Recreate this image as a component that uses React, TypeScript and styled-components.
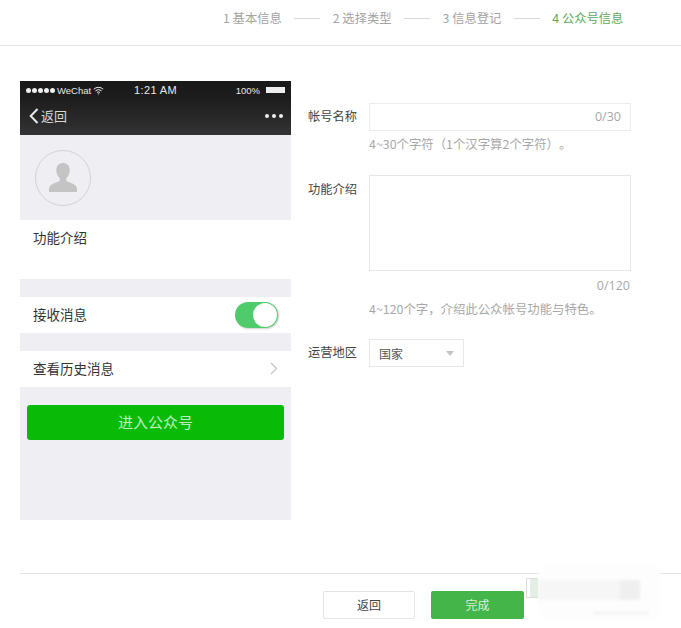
import { createGlobalStyle, styled } from 'styled-components';

const FONT = '"Noto Sans CJK SC", "Liberation Sans", sans-serif';

const GlobalStyle = createGlobalStyle`
  html, body {
    margin: 0;
    padding: 0;
    background: #fff;
    font-family: ${FONT};
  }
`;

const STEPS = ['1 基本信息', '2 选择类型', '3 信息登记', '4 公众号信息'];

const App = () => {
  return (
    <Page>
      <GlobalStyle />
      <StepBar>
        {STEPS.map((step, i) => (
          <StepItem key={step}>
            {i > 0 && <StepLine />}
            <StepLabel $active={i === STEPS.length - 1}>{step}</StepLabel>
          </StepItem>
        ))}
      </StepBar>

      <Content>
        <Phone>
          <PhoneHeader>
            <StatusBar>
              <StatusLeft>
                <Dots>
                  <i />
                  <i />
                  <i />
                  <i />
                  <i />
                </Dots>
                <span>WeChat</span>
                <svg width="11" height="9" viewBox="0 0 11 9" fill="none" stroke="#eee">
                  <path d="M.8 3.2a6.8 6.8 0 0 1 9.400 0M2.400 4.900a4.500 4.500 0 0 1 6.200 0M4 6.500a2.200 2.200 0 0 1 3 0" />
                  <path d="M5.500 8.800 4.600 7.600h1.800z" fill="#eee" stroke="none" />
                </svg>
              </StatusLeft>
              <StatusTime>1:21 AM</StatusTime>
              <StatusRight>
                <span>100%</span>
                <Battery />
              </StatusRight>
            </StatusBar>
            <NavBar>
              <BackLink>
                <svg width="10" height="16" viewBox="0 0 10 16" fill="none" stroke="#e8e8e8" strokeWidth="2">
                  <path d="M8.500 1 1.700 8l6.800 7" />
                </svg>
                返回
              </BackLink>
              <MoreDots>
                <i />
                <i />
                <i />
              </MoreDots>
            </NavBar>
          </PhoneHeader>

          <AvatarBand>
            <Avatar>
              <svg width="28" height="29" viewBox="0 0 28 29" fill="#c4c4c4">
                <path d="M14 0c4.200 0 6.700 3 6.700 7.300 0 3.400-1.500 6.200-3.400 8v2.600c2 1.200 10.700 3 10.700 7.500V29H0v-3.600c0-4.500 8.700-6.300 10.700-7.500v-2.600c-1.900-1.800-3.400-4.600-3.400-8C7.300 3 9.800 0 14 0z" />
              </svg>
            </Avatar>
          </AvatarBand>

          <IntroCell>功能介绍</IntroCell>
          <Gap />
          <Cell>
            <CellLabel>接收消息</CellLabel>
            <Toggle>
              <ToggleKnob />
            </Toggle>
          </Cell>
          <Gap />
          <Cell>
            <CellLabel>查看历史消息</CellLabel>
            <Chevron width="8" height="13" viewBox="0 0 8 13" fill="none" stroke="#c4c4c8" strokeWidth="1.300">
              <path d="m1 1 5.500 5.500L1 12" />
            </Chevron>
          </Cell>
          <EnterArea>
            <EnterButton>进入公众号</EnterButton>
          </EnterArea>
        </Phone>

        <Form>
          <FormRow $top={0}>
            <FieldLabel>帐号名称</FieldLabel>
            <FieldBody>
              <InputBox>0/30</InputBox>
              <Hint $gap={3}>4~30个字符（1个汉字算2个字符）。</Hint>
            </FieldBody>
          </FormRow>
          <FormRow $top={21}>
            <FieldLabel $offset={1}>功能介绍</FieldLabel>
            <FieldBody>
              <TextareaBox />
              <Counter>0/120</Counter>
              <Hint $gap={4}>4~120个字，介绍此公众帐号功能与特色。</Hint>
            </FieldBody>
          </FormRow>
          <FormRow $top={20}>
            <FieldLabel>运营地区</FieldLabel>
            <SelectBox>
              国家
              <Caret />
            </SelectBox>
          </FormRow>
        </Form>
      </Content>

      <Footer>
        <GhostButton>返回</GhostButton>
        <PrimaryButton>完成</PrimaryButton>
      </Footer>

      <Smudge>
        <SmudgeBand>
          <SmudgeCell />
        </SmudgeBand>
        <SmudgeCaption />
      </Smudge>
      <SmudgeEdge />
    </Page>
  );
};

const Page = styled.div`
  position: relative;
  width: 681px;
  height: 628px;
  overflow: hidden;
  background: #fff;
`;

const StepBar = styled.div`
  height: 46px;
  box-sizing: border-box;
  border-bottom: 1px solid #e6e6e6;
  padding: 10px 0 0 223px;
  display: flex;
`;

const StepItem = styled.div`
  display: flex;
  align-items: center;
  height: 16px;
`;

const StepLine = styled.span`
  display: block;
  width: 26px;
  height: 1px;
  margin: 0 12.500px;
  background: #d9d9d9;
`;

const StepLabel = styled.span<{ $active: boolean }>`
  font-size: 12.300px;
  line-height: 16px;
  white-space: nowrap;
  color: ${(p) => (p.$active ? '#5cab63' : '#a3a3a3')};
`;

const Content = styled.div`
  display: flex;
  padding: 35px 0 0 20px;
  height: 527px;
  box-sizing: border-box;
`;

const Phone = styled.div`
  width: 271px;
  height: 439px;
  background: #efeff3;
  display: flex;
  flex-direction: column;
`;

const PhoneHeader = styled.div`
  height: 54px;
  background: linear-gradient(#191919 0%, #1c1c1c 30%, #333335 100%);
  color: #e8e8e8;
`;

const StatusBar = styled.div`
  height: 18px;
  padding: 0 4px 0 6px;
  display: grid;
  grid-template-columns: 1fr auto 1fr;
  align-items: center;
  font-family: 'Liberation Sans', sans-serif;
  font-size: 9.500px;
`;

const StatusLeft = styled.div`
  display: flex;
  align-items: center;
  gap: 2px;
`;

const Dots = styled.span`
  display: flex;
  gap: 1px;

  i {
    display: block;
    width: 5px;
    height: 5px;
    border-radius: 50%;
    background: #eee;
  }
`;

const StatusTime = styled.div`
  font-size: 11px;
  letter-spacing: 0.4px;
  margin-left: -2px;
`;

const StatusRight = styled.div`
  display: flex;
  align-items: center;
  justify-content: flex-end;
  gap: 6px;
`;

const Battery = styled.i`
  display: block;
  width: 19px;
  height: 6px;
  margin-right: 2px;
  background: #eee;
`;

const NavBar = styled.div`
  height: 36px;
  box-sizing: border-box;
  padding: 0 8px 3px 9px;
  display: flex;
  align-items: center;
  justify-content: space-between;
`;

const BackLink = styled.div`
  display: flex;
  align-items: center;
  gap: 2px;
  font-size: 13px;
  color: #d8d8d8;
`;

const MoreDots = styled.div`
  display: flex;
  gap: 3px;

  i {
    display: block;
    width: 4px;
    height: 4px;
    border-radius: 50%;
    background: #eee;
  }
`;

const AvatarBand = styled.div`
  height: 85px;
  box-sizing: border-box;
  padding: 15px 0 0 15px;
`;

const Avatar = styled.div`
  width: 56px;
  height: 56px;
  box-sizing: border-box;
  border: 1px solid #d2d2d2;
  border-radius: 50%;
  display: flex;
  align-items: flex-end;
  justify-content: center;
  padding-bottom: 13px;
`;

const IntroCell = styled.div`
  height: 59px;
  box-sizing: border-box;
  background: #fff;
  padding: 7px 13px 0;
  font-size: 13.500px;
  line-height: 20px;
  color: #333;
`;

const Gap = styled.div`
  height: 18px;
`;

const Cell = styled.div`
  height: 36px;
  background: #fff;
  padding: 0 13px;
  display: flex;
  align-items: center;
  justify-content: space-between;
  font-size: 13.500px;
  color: #333;
`;

const CellLabel = styled.span`
  margin-bottom: 2px;
`;

const Chevron = styled.svg`
  margin-bottom: 2px;
`;

const Toggle = styled.div`
  width: 43px;
  height: 26px;
  border-radius: 13px;
  background: #4fcb6b;
  display: flex;
  align-items: center;
  justify-content: flex-end;
  box-shadow: 1px 1px 2px rgba(0, 0, 0, 0.2);
`;

const ToggleKnob = styled.i`
  display: block;
  width: 24px;
  height: 24px;
  margin-right: 1px;
  border-radius: 50%;
  background: #fff;
`;

const EnterArea = styled.div`
  padding: 18px 7px 0;
`;

const EnterButton = styled.div`
  height: 35px;
  line-height: 33px;
  border-radius: 3px;
  background: #09bb07;
  color: #bdeebb;
  text-align: center;
  font-size: 15px;
`;

const Form = styled.div`
  margin-left: 17px;
  padding-top: 22px;
  display: flex;
  flex-direction: column;
`;

const FormRow = styled.div<{ $top: number }>`
  display: flex;
  margin-top: ${(p) => p.$top}px;
`;

const FieldLabel = styled.div<{ $offset?: number }>`
  width: 49px;
  margin-right: 12px;
  padding-top: ${(p) => p.$offset ?? 0}px;
  font-size: 12.250px;
  line-height: 26px;
  color: #444;
  white-space: nowrap;
`;

const FieldBody = styled.div`
  width: 262px;
`;

const InputBox = styled.div`
  height: 28px;
  line-height: 26px;
  box-sizing: border-box;
  border: 1px solid #ececec;
  padding-right: 9px;
  text-align: right;
  font-size: 12.500px;
  font-family: 'Open Sans', sans-serif;
  color: #a8a8a8;
`;

const TextareaBox = styled.div`
  height: 96px;
  box-sizing: border-box;
  border: 1px solid #e6e6e6;
`;

const Counter = styled.div`
  margin-top: 6px;
  padding-right: 1px;
  text-align: right;
  font-size: 12.500px;
  line-height: 18px;
  font-family: 'Open Sans', sans-serif;
  color: #a8a8a8;
`;

const Hint = styled.div<{ $gap: number }>`
  margin-top: ${(p) => p.$gap}px;
  font-size: 12.400px;
  line-height: 20px;
  color: #a8a8a8;
  white-space: nowrap;
  text-spacing-trim: space-all;
`;

const SelectBox = styled.div`
  width: 95px;
  height: 28px;
  box-sizing: border-box;
  border: 1px solid #e8e8e8;
  padding: 0 9px 0 9px;
  display: flex;
  align-items: center;
  justify-content: space-between;
  font-size: 12px;
  color: #555;
`;

const Caret = styled.i`
  display: block;
  width: 0;
  height: 0;
  border-left: 4.500px solid transparent;
  border-right: 4.500px solid transparent;
  border-top: 5px solid #c4c4c4;
`;

const Footer = styled.div`
  margin-left: 20px;
  height: 55px;
  box-sizing: border-box;
  border-top: 1px solid #e2e2e2;
  padding: 17px 0 0 303px;
  display: flex;
  gap: 16px;
`;

const GhostButton = styled.div`
  width: 92px;
  height: 28px;
  line-height: 26px;
  box-sizing: border-box;
  border: 1px solid #e4e4e4;
  border-radius: 2px;
  text-align: center;
  font-size: 12px;
  color: #444;
`;

const PrimaryButton = styled.div`
  width: 93px;
  height: 28px;
  line-height: 28px;
  border-radius: 2px;
  background: #44b549;
  text-align: center;
  font-size: 12px;
  color: #d8f2d9;
`;

/* the blurred-out watermark in the bottom right corner */
const Smudge = styled.div`
  position: absolute;
  left: 538px;
  top: 563px;
  width: 123px;
  height: 57px;
  background: #fdfdfd;
  border-radius: 14px;
  filter: blur(1.500px);
`;

const SmudgeBand = styled.div`
  position: absolute;
  left: 0;
  top: 17px;
  width: 102px;
  height: 20px;
  background: #f6f6f6;
`;

const SmudgeCell = styled.div`
  position: absolute;
  right: 0;
  top: 0;
  width: 20px;
  height: 20px;
  background: #efefef;
`;

const SmudgeCaption = styled.div`
  position: absolute;
  left: 56px;
  top: 49px;
  width: 55px;
  height: 2px;
  background: #efefef;
`;

const SmudgeEdge = styled.div`
  position: absolute;
  left: 526px;
  top: 578px;
  width: 12px;
  height: 20px;
  box-sizing: border-box;
  border: 1px solid #dcdcdc;
  border-right: 0;
  background: linear-gradient(90deg, #fff 30%, #e3efe4 30%);
  filter: blur(0.500px);
`;

export default App;
